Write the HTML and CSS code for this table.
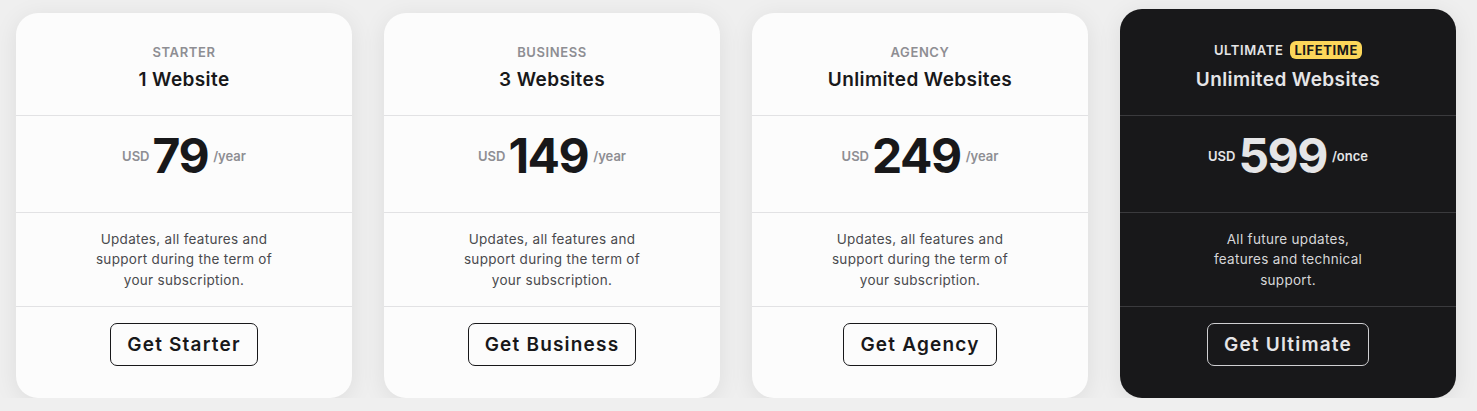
FILE: index.html
```html
<!DOCTYPE html>
<html>
<head>
<meta charset="utf-8">
<link rel="stylesheet" href="styles.css">
</head>
<body>
<div class="plans">
  <div class="card">
    <div class="sec head"><div class="label">STARTER</div><div class="title">1 Website</div></div>
    <div class="sec price"><span class="cur">USD</span><span class="amt">79</span><span class="per">/year</span></div>
    <div class="sec desc"><p>Updates, all features and support during the term of your subscription.</p></div>
    <div class="sec act"><button class="btn">Get Starter</button></div>
  </div>
  <div class="card">
    <div class="sec head"><div class="label">BUSINESS</div><div class="title">3 Websites</div></div>
    <div class="sec price"><span class="cur">USD</span><span class="amt">149</span><span class="per">/year</span></div>
    <div class="sec desc"><p>Updates, all features and support during the term of your subscription.</p></div>
    <div class="sec act"><button class="btn">Get Business</button></div>
  </div>
  <div class="card">
    <div class="sec head"><div class="label">AGENCY</div><div class="title">Unlimited Websites</div></div>
    <div class="sec price"><span class="cur">USD</span><span class="amt">249</span><span class="per">/year</span></div>
    <div class="sec desc"><p>Updates, all features and support during the term of your subscription.</p></div>
    <div class="sec act"><button class="btn">Get Agency</button></div>
  </div>
  <div class="card dark">
    <div class="sec head"><div class="label">ULTIMATE <span class="badge">LIFETIME</span></div><div class="title">Unlimited Websites</div></div>
    <div class="sec price"><span class="cur">USD</span><span class="amt">599</span><span class="per">/once</span></div>
    <div class="sec desc"><p>All future updates, features and technical support.</p></div>
    <div class="sec act"><button class="btn">Get Ultimate</button></div>
  </div>
</div>
</body>
</html>
```
FILE: styles.css
```css
* { box-sizing: border-box; }
body {
  margin: 0;
  background: #efefef;
  font-family: Inter, "Noto Sans", sans-serif;
}
.plans {
  display: flex;
  align-items: flex-end;
  gap: 32px;
  padding: 9px 16px 0;
  height: 398px;
}
.card {
  width: 336px;
  background: #fcfcfc;
  border-radius: 22px;
  box-shadow: 0 4px 24px rgba(0,0,0,0.08);
  display: flex;
  flex-direction: column;
  color: #18181a;
  overflow: hidden;
}
.sec {
  display: flex;
  flex-direction: column;
  align-items: center;
  justify-content: center;
  border-top: 1px solid #e2e2e4;
}
.sec:first-child { border-top: none; }
.head { height: 102px; padding-top: 7px; gap: 8px; }
.dark .head { height: 106px; padding-top: 7px; gap: 9px; }
.label {
  font-size: 13px;
  font-weight: 600;
  color: #8e8e93;
  letter-spacing: 0.6px;
  display: flex;
  align-items: center;
  gap: 7px;
}
.title { font-size: 19px; font-weight: 600; letter-spacing: 0.4px; }
.price {
  height: 97px;
  flex-direction: row;
  gap: 3px;
  padding-bottom: 16px;
}
.cur, .per { font-size: 13px; font-weight: 600; color: #8e8e93; }
.per { margin-left: 2px; }
.amt { font-size: 48px; font-weight: 700; letter-spacing: -1.5px; line-height: 1; }
.desc { height: 94px; padding-bottom: 0; }
.desc p {
  margin: 0;
  max-width: 196px;
  text-align: center;
  font-size: 13.5px;
  line-height: 20.5px;
  letter-spacing: 0.3px;
  color: #4a4a4e;
}
.act { height: 92px; padding-bottom: 16px; }
.btn {
  font-family: inherit;
  font-size: 19px;
  font-weight: 600;
  color: #18181a;
  background: transparent;
  border: 1px solid #18181a;
  border-radius: 7px;
  height: 43px;
  padding: 0 16px;
  letter-spacing: 1.2px;
}
.dark { background: #18181a; color: #e5e5e7; }
.dark .sec { border-top-color: #3a3a3d; }
.dark .sec:first-child { border-top: none; }
.dark .label { color: #e5e5e7; }
.dark .cur, .dark .per { color: #e5e5e7; }
.dark .desc p { color: #d6d6d8; max-width: 156px; }
.dark .btn { color: #e5e5e7; border-color: #cfcfd2; }
.badge {
  background: #fbd65a;
  color: #18181a;
  border-radius: 6px;
  padding: 1px 4px;
  font-size: 13px;
  font-weight: 700;
  letter-spacing: 0.6px;
}
```
